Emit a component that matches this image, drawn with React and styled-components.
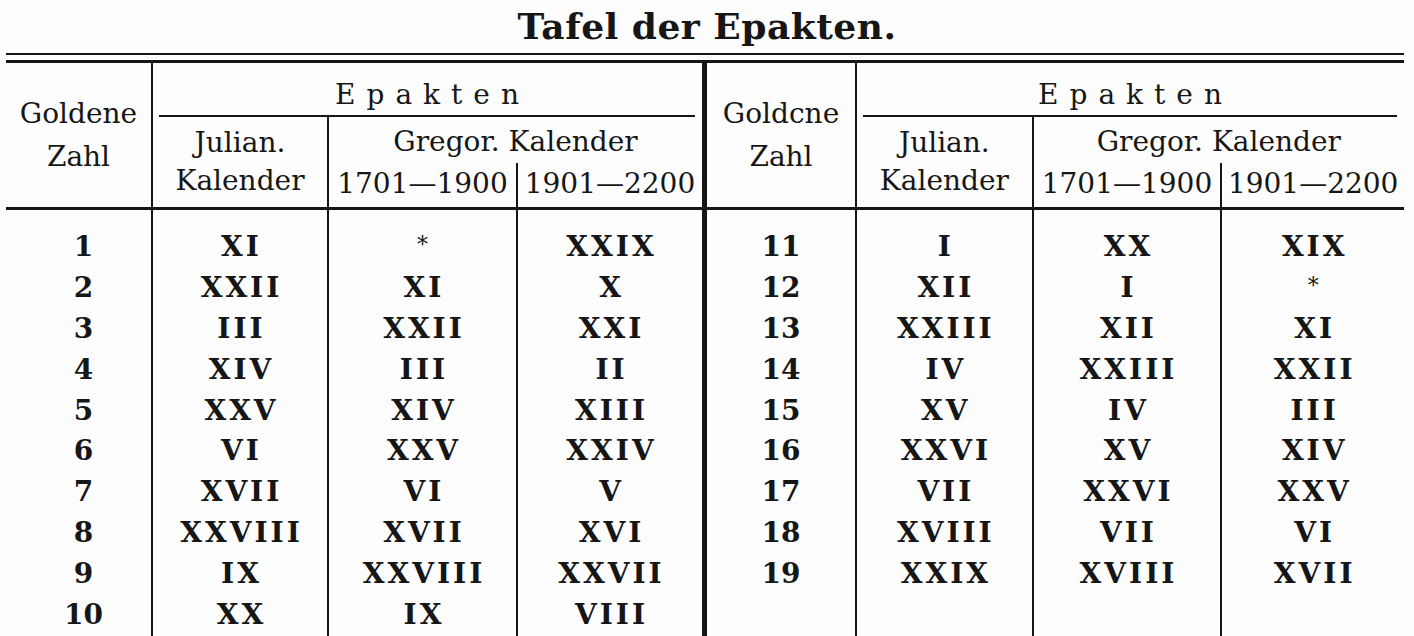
import React from 'react'
import styled, { createGlobalStyle } from 'styled-components'

const ink = '#161616'

const GlobalStyle = createGlobalStyle`
  html, body {
    margin: 0;
    padding: 0;
    background: #fdfdfd;
  }
  body {
    width: 1414px;
    height: 636px;
    overflow: hidden;
  }
`

const left = {
  cols: [146, 176, 189, 185],
  indent: 10,
  rows: [
    ['1', 'XI', '*', 'XXIX'],
    ['2', 'XXII', 'XI', 'X'],
    ['3', 'III', 'XXII', 'XXI'],
    ['4', 'XIV', 'III', 'II'],
    ['5', 'XXV', 'XIV', 'XIII'],
    ['6', 'VI', 'XXV', 'XXIV'],
    ['7', 'XVII', 'VI', 'V'],
    ['8', 'XXVIII', 'XVII', 'XVI'],
    ['9', 'IX', 'XXVIII', 'XXVII'],
    ['10', 'XX', 'IX', 'VIII'],
  ],
}

const right = {
  cols: [151, 176, 188, 182],
  indent: 0,
  rows: [
    ['11', 'I', 'XX', 'XIX'],
    ['12', 'XII', 'I', '*'],
    ['13', 'XXIII', 'XII', 'XI'],
    ['14', 'IV', 'XXIII', 'XXII'],
    ['15', 'XV', 'IV', 'III'],
    ['16', 'XXVI', 'XV', 'XIV'],
    ['17', 'VII', 'XXVI', 'XXV'],
    ['18', 'XVIII', 'VII', 'VI'],
    ['19', 'XXIX', 'XVIII', 'XVII'],
    ['', '', '', ''],
  ],
}

function EpactTable({ data, golden, divided }) {
  const width = data.cols.reduce((a, b) => a + b, 0) + (divided ? 5 : 0)
  return (
    <Half $w={width} $divided={divided}>
      <colgroup>
        {data.cols.map((w, i) => <Col key={i} $w={w} />)}
      </colgroup>
      <Head>
        <HeadRow $h={54}>
          <HeadCell rowSpan={3} $first $lh={43}>
            {golden}<br />Zahl
          </HeadCell>
          <EpaktenCell colSpan={3}>
            <SpacedHeading>Epakten</SpacedHeading>
          </EpaktenCell>
        </HeadRow>
        <HeadRow $h={46}>
          <HeadCell rowSpan={2} $lh={38}>
            Julian.<br />Kalender
          </HeadCell>
          <HeadCell colSpan={2} $shift={4}>Gregor. Kalender</HeadCell>
        </HeadRow>
        <HeadRow $h={45}>
          <HeadCell $shift={-2}>1701—1900</HeadCell>
          <HeadCell $shift={-2}>1901—2200</HeadCell>
        </HeadRow>
      </Head>
      <tbody>
        <SpacerRow $h={19}>
          {data.cols.map((_, i) => <Blank key={i} $first={i === 0} />)}
        </SpacerRow>
        {data.rows.map((row, r) => (
          <BodyRow key={r}>
            {row.map((v, i) =>
              i === 0 ? (
                <NumberCell key={i} $indent={data.indent}>{v}</NumberCell>
              ) : (
                <RomanCell key={i}>{v === '*' ? <Star>*</Star> : v}</RomanCell>
              )
            )}
          </BodyRow>
        ))}
        <SpacerRow $h={30}>
          {data.cols.map((_, i) => <Blank key={i} $first={i === 0} />)}
        </SpacerRow>
      </tbody>
    </Half>
  )
}

export default function App() {
  return (
    <>
      <GlobalStyle />
      <Page>
        <Title>Tafel der Epakten.</Title>
        <DoubleRule />
        <Tables>
          <EpactTable data={left} golden="Goldene" />
          <EpactTable data={right} golden="Goldcne" divided />
        </Tables>
      </Page>
    </>
  )
}

const Page = styled.div`
  width: 1414px;
  height: 636px;
  box-sizing: border-box;
  padding: 6px 10px 0 6px;
  overflow: hidden;
  color: ${ink};
  font-family: "DejaVu Serif", "Liberation Serif", serif;
`

const Title = styled.h1`
  margin: 0;
  font-size: 36px;
  line-height: 40px;
  font-weight: 700;
  text-align: center;
  letter-spacing: 0.5px;
  padding-left: 4px;
`

const DoubleRule = styled.div`
  margin-top: 7px;
  height: 5px;
  border-top: 2px solid ${ink};
  border-bottom: 3px solid ${ink};
`

const Tables = styled.div`
  display: flex;
  align-items: flex-start;
`

const Half = styled.table`
  width: ${p => p.$w}px;
  table-layout: fixed;
  border-collapse: collapse;
  ${p => p.$divided && `border-left: 5px solid ${ink};`}
`

const Col = styled.col`
  width: ${p => p.$w}px;
`

const Head = styled.thead`
  border-bottom: 3px solid ${ink};
`

const HeadRow = styled.tr`
  height: ${p => p.$h}px;
`

const HeadCell = styled.th`
  padding: ${p => (p.$shift > 0 ? `${p.$shift}px 0 0` : `0 0 ${-(p.$shift || 0)}px`)};
  font-weight: 400;
  font-size: 28px;
  line-height: ${p => p.$lh || 32}px;
  text-align: center;
  vertical-align: middle;
  white-space: nowrap;
  border-left: ${p => (p.$first ? 'none' : `2px solid ${ink}`)};
`

const EpaktenCell = styled.th`
  padding: 0 7px 0 6px;
  vertical-align: bottom;
  font-weight: 400;
  border-left: 2px solid ${ink};
`

const SpacedHeading = styled.div`
  font-size: 28px;
  line-height: 30px;
  letter-spacing: 11px;
  padding: 0 0 5px 11px;
  border-bottom: 2px solid ${ink};
  text-align: center;
`

const SpacerRow = styled.tr`
  height: ${p => p.$h}px;
`

const Blank = styled.td`
  padding: 0;
  border-left: ${p => (p.$first ? 'none' : `2px solid ${ink}`)};
`

const BodyRow = styled.tr`
  height: 40.8px;
`

const NumberCell = styled.td`
  padding: 0 0 0 ${p => p.$indent}px;
  text-align: center;
  vertical-align: middle;
  font-size: 28px;
  font-weight: 700;
  line-height: 1;
  white-space: nowrap;
`

const RomanCell = styled.td`
  padding: 0 0 0 3px;
  text-align: center;
  vertical-align: middle;
  font-size: 28px;
  font-weight: 700;
  line-height: 1;
  letter-spacing: 3px;
  white-space: nowrap;
  border-left: 2px solid ${ink};
`

const Star = styled.span`
  font-size: 22px;
  font-weight: 400;
  position: relative;
  top: -4px;
`
